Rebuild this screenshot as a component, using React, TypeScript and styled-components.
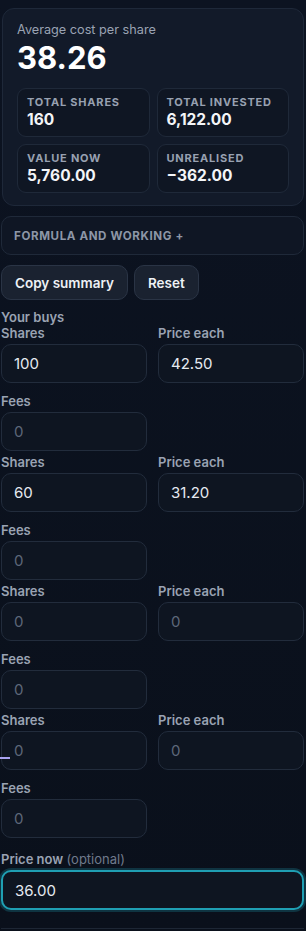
import styled, { createGlobalStyle } from "styled-components";

const GlobalStyle = createGlobalStyle`
  * { box-sizing: border-box; }
  html, body {
    margin: 0;
    padding: 0;
    background: #0b111c;
  }
  body {
    font-family: Inter, "Noto Sans", "Liberation Sans", sans-serif;
    color: #e6eaf1;
  }
`;

const Page = styled.div`
  padding: 8px 2px 0 1px;
  min-height: 931px;
  background: linear-gradient(180deg, #0c1321 0%, #0a101b 100%);
`;

const SummaryCard = styled.section`
  margin-left: 1px;
  background: #121a29;
  border: 1px solid #1e2839;
  border-radius: 12px;
  padding: 12px 14px 12px 14px;
`;

const SummaryTitle = styled.div`
  font-size: 12.7px;
  line-height: 18px;
  color: #9aa3b3;
`;

const BigNumber = styled.div`
  font-size: 31px;
  line-height: 37px;
  font-weight: 700;
  color: #ffffff;
  margin-bottom: 12px;
`;

const StatGrid = styled.div`
  display: grid;
  grid-template-columns: 1fr 1fr;
  gap: 7px;
`;

const StatBox = styled.div`
  background: #0f1623;
  border: 1px solid #1f2939;
  border-radius: 9px;
  height: 49px;
  padding: 6px 9px;
`;

const StatLabel = styled.div`
  font-size: 11px;
  line-height: 15px;
  font-weight: 700;
  letter-spacing: 0.8px;
  text-transform: uppercase;
  color: #98a1b1;
`;

const StatValue = styled.div`
  font-size: 15.5px;
  line-height: 20px;
  font-weight: 700;
  color: #f3f5f8;
`;

const FormulaBox = styled.div`
  margin-top: 10px;
  height: 39px;
  display: flex;
  align-items: center;
  padding: 0 12px;
  background: #0f1624;
  border: 1px solid #1f2939;
  border-radius: 10px;
  font-size: 11.6px;
  font-weight: 700;
  letter-spacing: 0.6px;
  color: #8d96a7;
`;

const ButtonRow = styled.div`
  display: flex;
  gap: 6px;
  margin-top: 10px;
`;

const Button = styled.button`
  height: 35px;
  padding: 0 13px;
  background: #1a2230;
  border: 1px solid #2a3445;
  border-radius: 10px;
  font-family: inherit;
  font-size: 13.5px;
  font-weight: 600;
  color: #eef1f5;
`;

const SectionTitle = styled.div`
  margin-top: 9px;
  font-size: 13px;
  line-height: 16px;
  font-weight: 600;
  color: #9aa3b3;
`;

const BuyBlock = styled.div<{ first?: boolean }>`
  margin-top: ${(p) => (p.first ? "0" : "3px")};
`;

const Pair = styled.div`
  display: grid;
  grid-template-columns: 146px 146px;
  column-gap: 11px;
`;

const Field = styled.label<{ spaced?: boolean }>`
  position: relative;
  display: flex;
  flex-direction: column;
  gap: 2px;
  margin-top: ${(p) => (p.spaced ? "10px" : "0")};
`;

const PriceNowField = styled(Field)`
  margin-top: 13px;
`;

const FieldLabel = styled.span`
  font-size: 13px;
  line-height: 17px;
  font-weight: 600;
  color: #9aa3b3;
`;

const Optional = styled.span`
  font-weight: 400;
  color: #707a8c;
`;

const Input = styled.input<{ wide?: boolean; focused?: boolean }>`
  width: ${(p) => (p.wide ? "100%" : "146px")};
  height: ${(p) => (p.focused ? "40px" : "39px")};
  padding: 0 12px;
  background: #0e1521;
  border: ${(p) => (p.focused ? "2px solid #1f9fb3" : "1px solid #222c3c")};
  box-shadow: ${(p) => (p.focused ? "0 0 0 2px rgba(31,159,179,0.25)" : "none")};
  border-radius: 10px;
  font-family: inherit;
  font-size: 15px;
  color: #e6eaf1;
  outline: none;
  &::placeholder {
    color: #5d6779;
  }
`;

const DragMark = styled.span`
  position: absolute;
  left: -1px;
  bottom: 11px;
  width: 10px;
  height: 2px;
  background: #a9a3f2;
`;

const Divider = styled.div`
  margin-top: 18px;
  border-top: 1px solid #1d2634;
  height: 4px;
`;

interface Buy {
  shares: string;
  price: string;
  fees: string;
}

const buys: Buy[] = [
  { shares: "100", price: "42.50", fees: "" },
  { shares: "60", price: "31.20", fees: "" },
  { shares: "", price: "", fees: "" },
  { shares: "", price: "", fees: "" },
];

const stats = [
  { label: "Total shares", value: "160" },
  { label: "Total invested", value: "6,122.00" },
  { label: "Value now", value: "5,760.00" },
  { label: "Unrealised", value: "\u2212362.00" },
];

export default function App() {
  return (
    <>
      <GlobalStyle />
      <Page>
        <SummaryCard>
          <SummaryTitle>Average cost per share</SummaryTitle>
          <BigNumber>38.26</BigNumber>
          <StatGrid>
            {stats.map((s) => (
              <StatBox key={s.label}>
                <StatLabel>{s.label}</StatLabel>
                <StatValue>{s.value}</StatValue>
              </StatBox>
            ))}
          </StatGrid>
        </SummaryCard>

        <FormulaBox>FORMULA AND WORKING +</FormulaBox>

        <ButtonRow>
          <Button>Copy summary</Button>
          <Button>Reset</Button>
        </ButtonRow>

        <SectionTitle>Your buys</SectionTitle>
        {buys.map((b, i) => (
          <BuyBlock key={i} first={i === 0}>
            <Pair>
              <Field>
                <FieldLabel>Shares</FieldLabel>
                <Input defaultValue={b.shares} placeholder="0" />
                {i === 3 && <DragMark />}
              </Field>
              <Field>
                <FieldLabel>Price each</FieldLabel>
                <Input defaultValue={b.price} placeholder="0" />
              </Field>
            </Pair>
            <Field spaced>
              <FieldLabel>Fees</FieldLabel>
              <Input defaultValue={b.fees} placeholder="0" />
            </Field>
          </BuyBlock>
        ))}

        <PriceNowField>
          <FieldLabel>
            Price now <Optional>(optional)</Optional>
          </FieldLabel>
          <Input wide focused defaultValue="36.00" />
        </PriceNowField>
        <Divider />
      </Page>
    </>
  );
}
